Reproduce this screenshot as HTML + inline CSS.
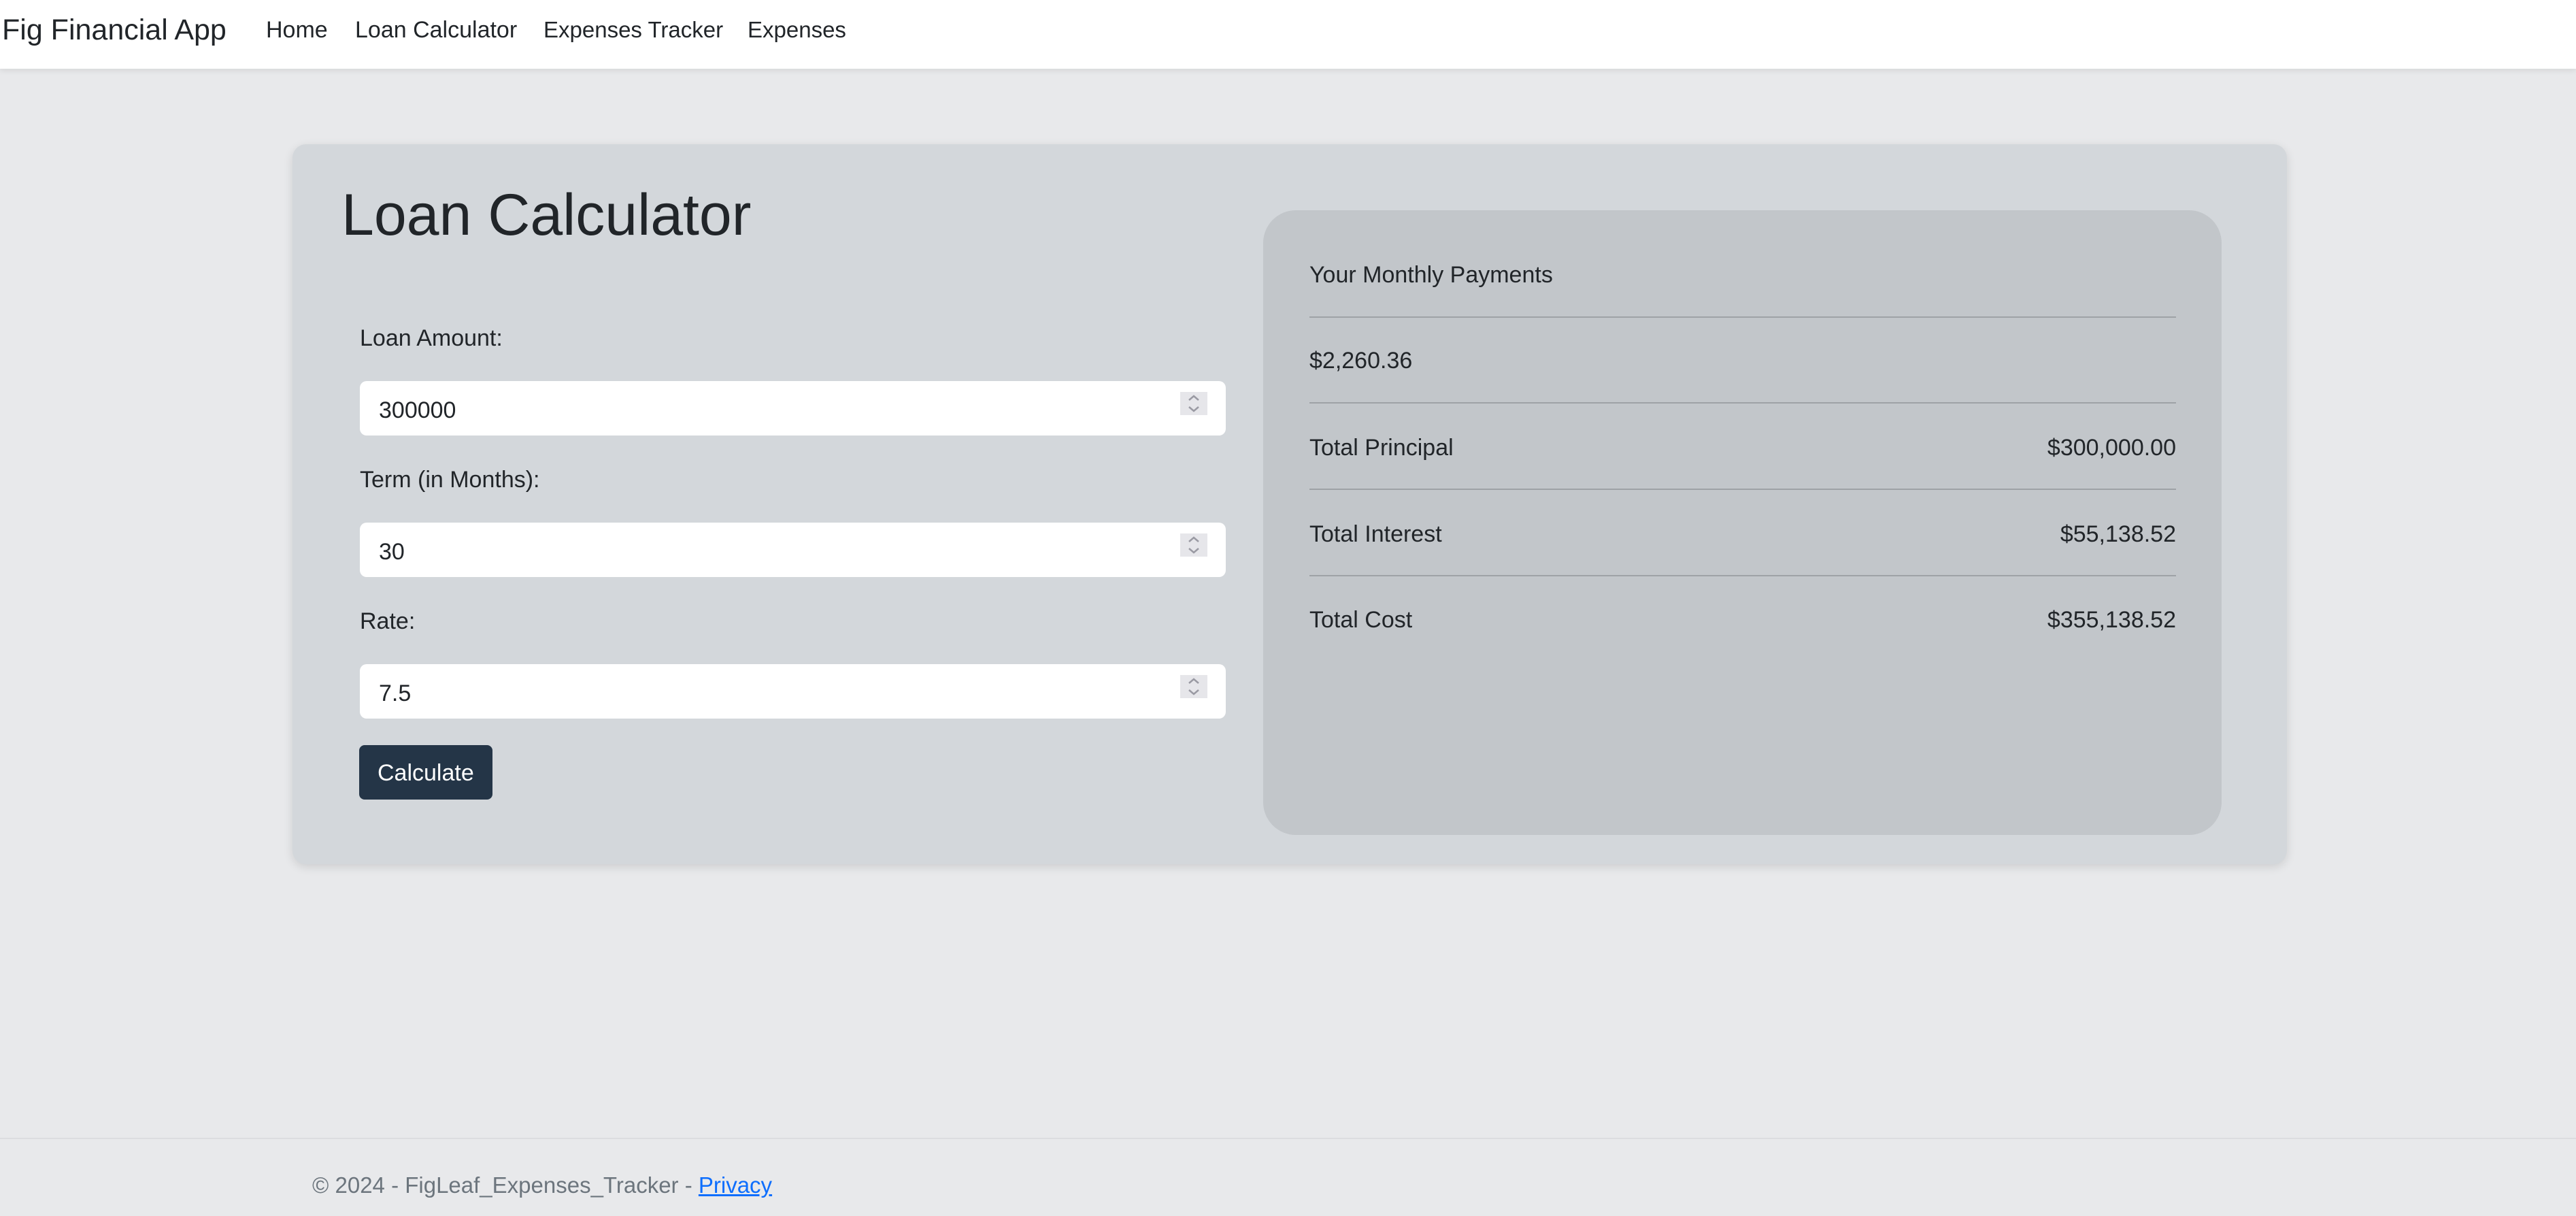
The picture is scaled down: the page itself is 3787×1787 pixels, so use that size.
<!DOCTYPE html>
<html><head><meta charset="utf-8"><style>
*{box-sizing:border-box;margin:0;padding:0}
html,body{width:3787px;height:1787px;overflow:hidden;background:#e8e9eb;font-family:"Liberation Sans",sans-serif;color:#212529}
.nav{position:absolute;left:0;top:0;width:3787px;height:101px;background:#fff;box-shadow:0 3px 8px rgba(0,0,0,.08)}
.t{position:absolute;white-space:nowrap;line-height:1}
.card{position:absolute;left:430px;top:212px;width:2932px;height:1058px;background:#d3d7db;border-radius:20px;box-shadow:0 4px 14px rgba(0,0,0,.12)}
.inp{position:absolute;left:529px;width:1273px;height:80px;background:#fff;border-radius:10px}
.inp span{position:absolute;left:28px;top:24px;font-size:34px}
.spin{position:absolute;right:27px;top:16px;width:40px;height:34px;background:#e6e6ea}
.spin svg{position:absolute;left:0;top:0}
.panel{position:absolute;left:1857px;top:309px;width:1409px;height:918px;background:#c2c6ca;border-radius:48px}
.hr{position:absolute;left:1925px;width:1274px;height:2px;background:#9ea2a6}
.r{font-size:34px}
</style></head><body>
<div class="nav"></div>
<div class="t" style="left:3px;top:23px;font-size:43px">Fig Financial App</div>
<div class="t" style="left:391px;top:27px;font-size:34px">Home</div>
<div class="t" style="left:522px;top:27px;font-size:34px">Loan Calculator</div>
<div class="t" style="left:799px;top:27px;font-size:33px">Expenses Tracker</div>
<div class="t" style="left:1099px;top:27px;font-size:33px">Expenses</div>

<div class="card"></div>
<div class="t" style="left:502px;top:273px;font-size:86px">Loan Calculator</div>
<div class="t" style="left:529px;top:480px;font-size:34px">Loan Amount:</div>
<div class="inp" style="top:560px"><span>300000</span><div class="spin"><svg width="40" height="34"><path d="M13 12l7-6 7 6M13 22l7 6 7-6" fill="none" stroke="#9a9aa3" stroke-width="2.5"/></svg></div></div>
<div class="t" style="left:529px;top:688px;font-size:34px">Term (in Months):</div>
<div class="inp" style="top:768px"><span>30</span><div class="spin"><svg width="40" height="34"><path d="M13 12l7-6 7 6M13 22l7 6 7-6" fill="none" stroke="#9a9aa3" stroke-width="2.5"/></svg></div></div>
<div class="t" style="left:529px;top:896px;font-size:34px">Rate:</div>
<div class="inp" style="top:976px"><span>7.5</span><div class="spin"><svg width="40" height="34"><path d="M13 12l7-6 7 6M13 22l7 6 7-6" fill="none" stroke="#9a9aa3" stroke-width="2.5"/></svg></div></div>
<div style="position:absolute;left:528px;top:1095px;width:196px;height:80px;background:#243547;border-radius:8px"></div>
<div class="t" style="left:555px;top:1119px;font-size:34px;color:#fff">Calculate</div>

<div class="panel"></div>
<div class="t r" style="left:1925px;top:387px">Your Monthly Payments</div>
<div class="hr" style="top:465px"></div>
<div class="t r" style="left:1925px;top:513px">$2,260.36</div>
<div class="hr" style="top:591px"></div>
<div class="t r" style="left:1925px;top:641px">Total Principal</div>
<div class="t r" style="right:588px;top:641px">$300,000.00</div>
<div class="hr" style="top:718px"></div>
<div class="t r" style="left:1925px;top:768px">Total Interest</div>
<div class="t r" style="right:588px;top:768px">$55,138.52</div>
<div class="hr" style="top:845px"></div>
<div class="t r" style="left:1925px;top:894px">Total Cost</div>
<div class="t r" style="right:588px;top:894px">$355,138.52</div>

<div style="position:absolute;left:0;top:1672px;width:3787px;height:2px;background:#dcdde0"></div>
<div class="t" style="left:459px;top:1725px;font-size:33px;color:#6c757d">© 2024 - FigLeaf_Expenses_Tracker - <span style="color:#0d6efd;text-decoration:underline">Privacy</span></div>
</body></html>
